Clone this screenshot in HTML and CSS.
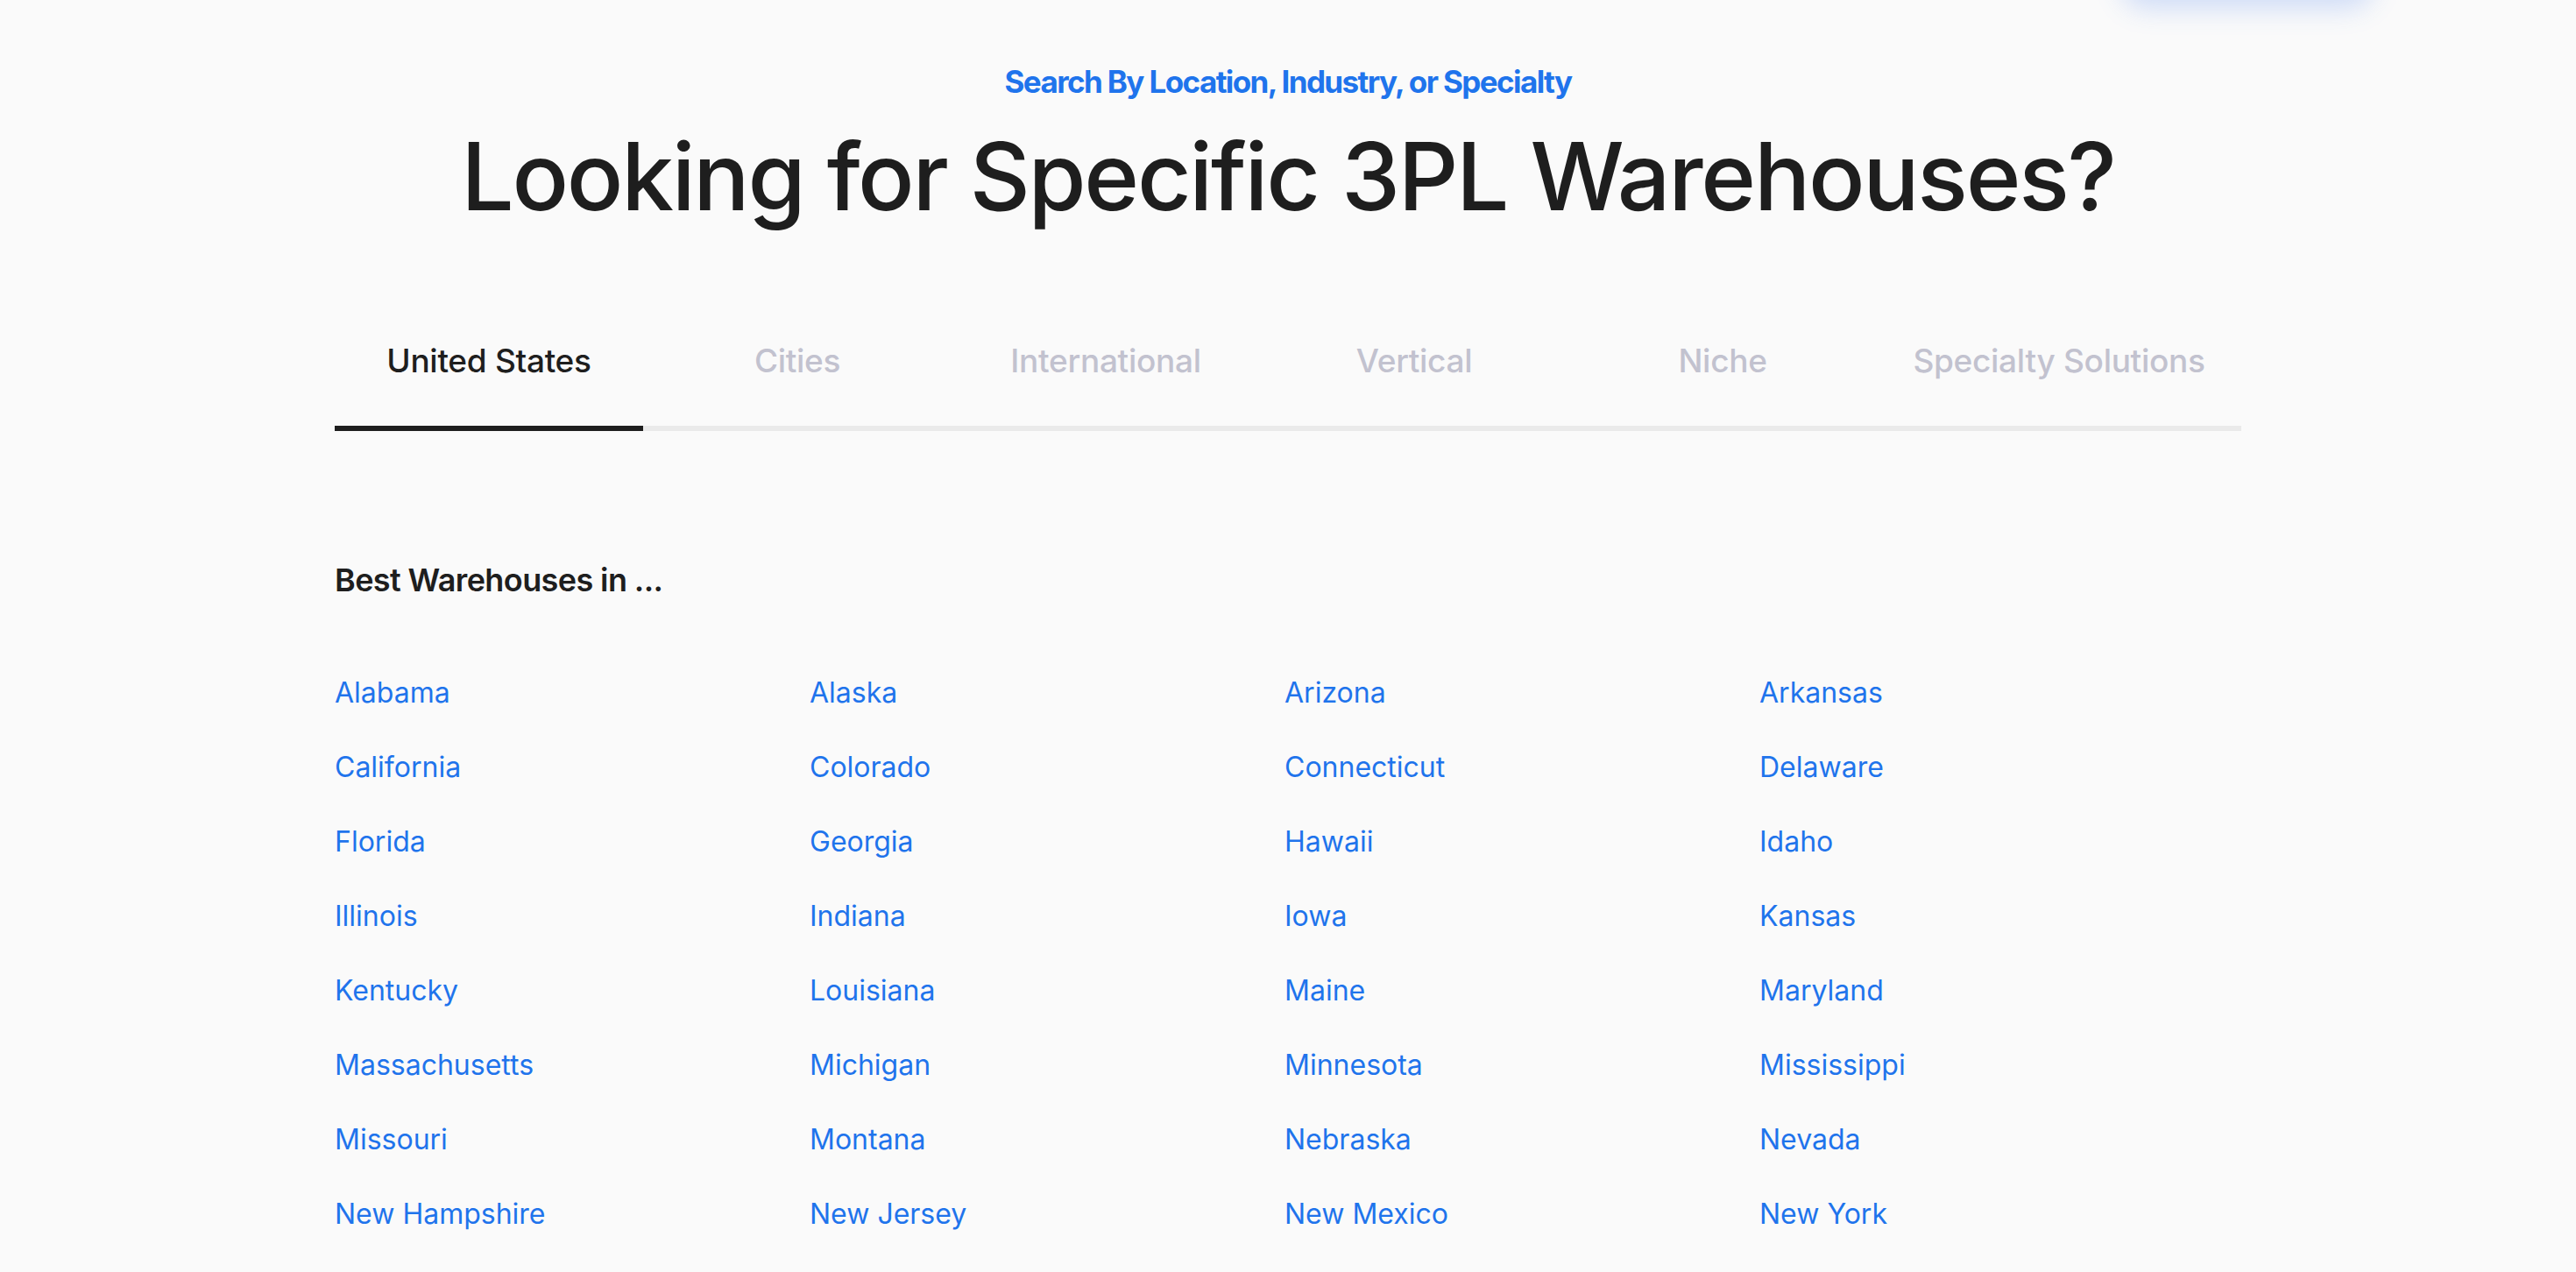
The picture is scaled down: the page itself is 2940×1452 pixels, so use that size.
FILE: index.html
```html
<!DOCTYPE html>
<html lang="en">
<head>
<meta charset="utf-8">
<title>Looking for Specific 3PL Warehouses?</title>
<link rel="stylesheet" href="styles.css">
</head>
<body>
<div class="glow" aria-hidden="true"></div>
<section class="finder">
  <p class="eyebrow">Search By Location, Industry, or Specialty</p>
  <h1 class="title">Looking for Specific 3PL Warehouses?</h1>
  <nav class="tabs">
    <a class="tab active" href="#">United States</a>
    <a class="tab" href="#">Cities</a>
    <a class="tab" href="#">International</a>
    <a class="tab" href="#">Vertical</a>
    <a class="tab" href="#">Niche</a>
    <a class="tab wide" href="#">Specialty Solutions</a>
  </nav>
  <h2 class="list-title">Best Warehouses in ...</h2>
  <ul class="states">
    <li><a href="#">Alabama</a></li>
    <li><a href="#">Alaska</a></li>
    <li><a href="#">Arizona</a></li>
    <li><a href="#">Arkansas</a></li>
    <li><a href="#">California</a></li>
    <li><a href="#">Colorado</a></li>
    <li><a href="#">Connecticut</a></li>
    <li><a href="#">Delaware</a></li>
    <li><a href="#">Florida</a></li>
    <li><a href="#">Georgia</a></li>
    <li><a href="#">Hawaii</a></li>
    <li><a href="#">Idaho</a></li>
    <li><a href="#">Illinois</a></li>
    <li><a href="#">Indiana</a></li>
    <li><a href="#">Iowa</a></li>
    <li><a href="#">Kansas</a></li>
    <li><a href="#">Kentucky</a></li>
    <li><a href="#">Louisiana</a></li>
    <li><a href="#">Maine</a></li>
    <li><a href="#">Maryland</a></li>
    <li><a href="#">Massachusetts</a></li>
    <li><a href="#">Michigan</a></li>
    <li><a href="#">Minnesota</a></li>
    <li><a href="#">Mississippi</a></li>
    <li><a href="#">Missouri</a></li>
    <li><a href="#">Montana</a></li>
    <li><a href="#">Nebraska</a></li>
    <li><a href="#">Nevada</a></li>
    <li><a href="#">New Hampshire</a></li>
    <li><a href="#">New Jersey</a></li>
    <li><a href="#">New Mexico</a></li>
    <li><a href="#">New York</a></li>
  </ul>
</section>
</body>
</html>
```

FILE: styles.css
```css
* { box-sizing: border-box; }

html, body {
  margin: 0;
  padding: 0;
  background: #fafafa;
  font-family: Inter, "Noto Sans", "Liberation Sans", sans-serif;
  color: #1e1e1e;
  overflow: hidden;
}

.glow {
  position: absolute;
  top: -64px;
  left: 2420px;
  width: 290px;
  height: 60px;
  border-radius: 30px;
  background: #1f74ec;
  box-shadow: 0 14px 30px rgba(60, 120, 240, 0.22);
}

.finder {
  width: 2176px;
  margin: 0 auto;
  padding-top: 71px;
}

.eyebrow {
  margin: 0;
  text-align: center;
  font-size: 35px;
  line-height: 44px;
  font-weight: 700;
  color: #1f74ec;
  letter-spacing: -1.6px;
}

.title {
  margin: 21px 0 0;
  text-align: center;
  font-size: 107px;
  line-height: 130px;
  font-weight: 500;
  color: #1e1e1e;
  letter-spacing: -2.3px;
}

.tabs {
  display: grid;
  grid-template-columns: repeat(5, 352px) 1fr;
  margin-top: 123px;
  border-bottom: 6px solid #eaeaea;
}

.tab {
  display: block;
  text-align: center;
  font-size: 37px;
  line-height: 45px;
  font-weight: 500;
  color: #c2c2cf;
  text-decoration: none;
  padding-bottom: 52px;
  margin-bottom: -6px;
  border-bottom: 6px solid transparent;
  letter-spacing: -0.3px;
}

.tab.active {
  color: #1e1e1e;
  border-bottom-color: #1e1e1e;
}

.list-title {
  margin: 148px 0 0;
  font-size: 36px;
  line-height: 44px;
  font-weight: 600;
  color: #1e1e1e;
  letter-spacing: -0.6px;
}

.states {
  list-style: none;
  margin: 87px 0 0;
  padding: 0;
  display: grid;
  grid-template-columns: repeat(4, 542px);
  row-gap: 45px;
}

.states li {
  font-size: 32px;
  line-height: 40px;
}

.states a {
  color: #1f74ec;
  text-decoration: none;
  letter-spacing: 0;
}
```
